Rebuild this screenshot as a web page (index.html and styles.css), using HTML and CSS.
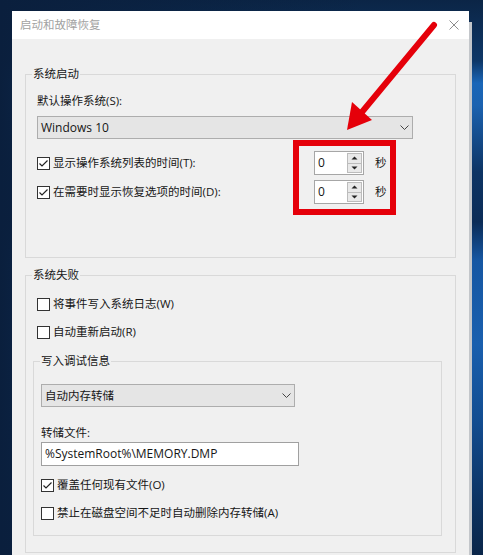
FILE: index.html
```html
<!DOCTYPE html>
<html lang="zh-CN">
<head>
<meta charset="utf-8">
<title>启动和故障恢复</title>
<link rel="stylesheet" href="styles.css">
</head>
<body>
<div class="desktop">
  <div class="window">
    <div class="titlebar">
      <span class="title">启动和故障恢复</span>
      <svg class="close" width="10" height="10" viewBox="0 0 10 10"><path d="M0.5 0.5 L9.5 9.5 M9.5 0.5 L0.5 9.5" stroke="#8c8c8c" stroke-width="1" fill="none"/></svg>
    </div>
    <div class="client">
      <fieldset class="group g1">
        <legend>系统启动</legend>
        <div class="g1-body">
          <div class="label">默认操作系统(S):</div>
          <div class="combo combo-os">
            <span class="latin">Windows 10</span>
            <svg class="chev" width="9" height="5" viewBox="0 0 9 5"><polyline points="0.5,0.5 4.5,4.5 8.5,0.5" stroke="#444" stroke-width="1" fill="none"/></svg>
          </div>
          <div class="timer-row">
            <div class="check">
              <span class="box"><svg width="11" height="11" viewBox="0 0 11 11"><path d="M1.5 5.5 L4 8 L9.5 2.5" stroke="#222" stroke-width="1.2" fill="none"/></svg></span>
              <span>显示操作系统列表的时间(T):</span>
            </div>
            <div class="spin">
              <span class="val latin">0</span>
              <div class="spin-btns">
                <span class="sbtn"><svg width="7" height="4" viewBox="0 0 7 4"><polygon points="0.5,3.5 3.5,0.5 6.5,3.5" fill="#222"/></svg></span>
                <span class="sbtn"><svg width="7" height="4" viewBox="0 0 7 4"><polygon points="0.5,0.5 3.5,3.5 6.5,0.5" fill="#222"/></svg></span>
              </div>
            </div>
            <span class="unit">秒</span>
          </div>
          <div class="timer-row">
            <div class="check">
              <span class="box"><svg width="11" height="11" viewBox="0 0 11 11"><path d="M1.5 5.5 L4 8 L9.5 2.5" stroke="#222" stroke-width="1.2" fill="none"/></svg></span>
              <span>在需要时显示恢复选项的时间(D):</span>
            </div>
            <div class="spin">
              <span class="val latin">0</span>
              <div class="spin-btns">
                <span class="sbtn"><svg width="7" height="4" viewBox="0 0 7 4"><polygon points="0.5,3.5 3.5,0.5 6.5,3.5" fill="#222"/></svg></span>
                <span class="sbtn"><svg width="7" height="4" viewBox="0 0 7 4"><polygon points="0.5,0.5 3.5,3.5 6.5,0.5" fill="#222"/></svg></span>
              </div>
            </div>
            <span class="unit">秒</span>
          </div>
        </div>
      </fieldset>

      <fieldset class="group g2">
        <legend>系统失败</legend>
        <div class="g2-body">
          <div class="check check-row">
            <span class="box"></span>
            <span>将事件写入系统日志(W)</span>
          </div>
          <div class="check check-row">
            <span class="box"></span>
            <span>自动重新启动(R)</span>
          </div>
          <fieldset class="group g3">
            <legend>写入调试信息</legend>
            <div class="g3-body">
              <div class="combo combo-dump">
                <span>自动内存转储</span>
                <svg class="chev" width="9" height="5" viewBox="0 0 9 5"><polyline points="0.5,0.5 4.5,4.5 8.5,0.5" stroke="#444" stroke-width="1" fill="none"/></svg>
              </div>
              <div class="label label-file">转储文件:</div>
              <div class="text-input latin">%SystemRoot%\MEMORY.DMP</div>
              <div class="check check-row2">
                <span class="box"><svg width="11" height="11" viewBox="0 0 11 11"><path d="M1.5 5.5 L4 8 L9.5 2.5" stroke="#222" stroke-width="1.2" fill="none"/></svg></span>
                <span>覆盖任何现有文件(O)</span>
              </div>
              <div class="check check-row2">
                <span class="box"></span>
                <span>禁止在磁盘空间不足时自动删除内存转储(A)</span>
              </div>
            </div>
          </fieldset>
        </div>
      </fieldset>
    </div>
  </div>
  <div class="highlight"></div>
  <svg class="arrow" width="483" height="555" viewBox="0 0 483 555">
    <line x1="434" y1="25" x2="362" y2="112" stroke="#e5000a" stroke-width="6" stroke-linecap="round"/>
    <polygon points="347,130 352,102 372,120" fill="#e5000a"/>
  </svg>
</div>
</body>
</html>
```

FILE: styles.css
```css
body {
  margin: 0;
}

.desktop {
  position: relative;
  width: 483px;
  height: 555px;
  overflow: hidden;
  box-sizing: border-box;
  padding: 11px 0 0 12px;
  background:
    linear-gradient(to right, #0a1f3d 0%, rgba(10, 31, 61, 0) 75%),
    linear-gradient(to bottom, #0b2546 0%, #0e3767 11%, #1a66b8 15%, #1b62b0 19%, #0d3464 31%, #0b2c57 40%, #1657a3 47%, #195fae 62%, #124c90 76%, #0c3363 90%, #0a2548 100%);
  font-family: "Open Sans", "Noto Sans CJK SC", sans-serif;
  font-size: 11.5px;
  color: #161616;
}

.latin {
  font-size: 12px;
}

.window {
  width: 457px;
  height: 544px;
  display: flex;
  flex-direction: column;
  background: #f0f0f0;
  box-shadow: 3px 11px 0 0 #c3c6ca;
}

.titlebar {
  height: 28px;
  flex: none;
  background: #fff;
  display: flex;
  align-items: center;
  justify-content: space-between;
  padding: 0 10px 0 8px;
}

.title {
  color: #a2a2a2;
  line-height: 16px;
}

.close {
  display: block;
}

.client {
  flex: 1;
  padding: 27px 13px 0;
}

.group {
  margin: 0;
  padding: 0;
  border: 1px solid #d9d9d9;
  min-width: 0;
}

.group legend {
  margin-left: 6px;
  padding: 0 1px;
  line-height: 16px;
}

.g1-body {
  padding: 11px 0 53px 11px;
}

.label {
  line-height: 16px;
}

.combo {
  height: 23px;
  box-sizing: border-box;
  border: 1px solid #adadad;
  background: #e5e5e5;
  display: flex;
  align-items: center;
  justify-content: space-between;
  padding: 0 3px 0 3px;
  line-height: 16px;
}

.chev {
  display: block;
}

.combo-os {
  width: 376px;
  margin-top: 7px;
}

.timer-row {
  display: grid;
  grid-template-columns: 277px 50px auto;
  align-items: center;
  height: 24px;
  margin-top: 12px;
}

.timer-row + .timer-row {
  margin-top: 5px;
}

.check {
  display: flex;
  align-items: center;
  gap: 3px;
  line-height: 16px;
  white-space: nowrap;
}

.box {
  width: 13px;
  height: 13px;
  flex: none;
  box-sizing: border-box;
  border: 1px solid #333;
  background: #fff;
  display: flex;
}

.box svg {
  display: block;
}

.spin {
  height: 24px;
  box-sizing: border-box;
  border: 1px solid #a6a6a6;
  background: #fff;
  display: flex;
}

.spin .val {
  flex: 1;
  padding-left: 3px;
  line-height: 22px;
}

.spin-btns {
  width: 15px;
  display: flex;
  flex-direction: column;
  margin: 1px 1px 1px 0;
}

.sbtn {
  flex: 1;
  box-sizing: border-box;
  border: 1px solid #bcbcbc;
  background: #e9e9e9;
  display: flex;
  align-items: center;
  justify-content: center;
}

.sbtn + .sbtn {
  border-top: none;
}

.sbtn svg {
  display: block;
}

.unit {
  margin-left: 11px;
  line-height: 16px;
}

.g2 {
  margin-top: 9px;
}

.g2-body {
  padding: 12px 13px 16px 7px;
}

.check-row {
  margin-left: 4px;
  height: 18px;
}

.check-row + .check-row {
  margin-top: 10px;
}

.g3 {
  margin-top: 12px;
}

.g3-body {
  padding: 15px 0 13px 7px;
}

.combo-dump {
  width: 254px;
}

.label-file {
  margin-top: 18px;
}

.text-input {
  margin-top: 1px;
  width: 258px;
  height: 24px;
  box-sizing: border-box;
  border: 1px solid #a0a0a0;
  background: #fff;
  padding-left: 3px;
  line-height: 22px;
}

.check-row2 {
  height: 18px;
  margin-top: 10px;
}

.highlight {
  position: absolute;
  left: 293px;
  top: 140px;
  width: 103px;
  height: 75px;
  box-sizing: border-box;
  border: 6px solid #e5000a;
}

.arrow {
  position: absolute;
  left: 0;
  top: 0;
  pointer-events: none;
}
```
